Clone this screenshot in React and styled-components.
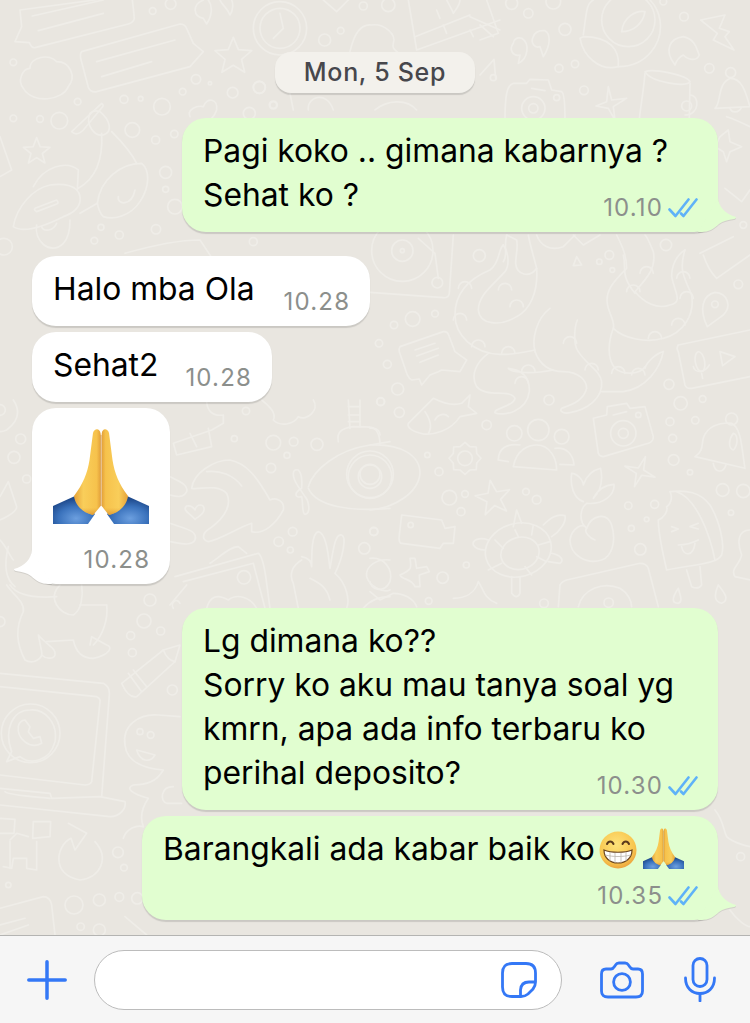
import React from 'react';
import styled, { createGlobalStyle } from 'styled-components';

const starPath = (cx, cy, R, r, n = 5, rot = -90) => {
  const pts = [];
  for (let i = 0; i < n * 2; i++) {
    const rad = i % 2 ? r : R;
    const a = ((rot + (i * 180) / n) * Math.PI) / 180;
    pts.push(`${(cx + rad * Math.cos(a)).toFixed(1)} ${(cy + rad * Math.sin(a)).toFixed(1)}`);
  }
  return `M${pts.join(' L')}Z`;
};

/* wallpaper doodles, traced at 3x from the crops, so each group has an origin */
const doodles = [
  {
    x: 0, y: 0,
    paths: [
      'M60 30 L395 -15 Q400 20 403 55 Q400 68 385 72 L105 143 Q95 145 88 128 L45 125 L65 80 Z',
      'M97 48 L310 0', 'M115 92 L310 40',
      'M245 155 L540 72 Q555 72 560 85 L580 130 L610 155 L570 200 L290 275 Q272 278 265 262 L242 175 Q240 160 245 155Z',
      'M290 185 L525 120', 'M305 230 L455 185',
      'M70 265 C50 240 70 205 90 205 C90 170 150 160 170 185 C210 185 230 230 205 260 C190 300 100 315 70 265Z',
      starPath(700, 170, 58, 26), starPath(110, 455, 42, 18),
      'M0 410 L35 510 L0 530',
      'M610 0 C575 15 580 50 610 55 L620 72 C635 50 640 20 625 0', 'M660 0 C665 15 680 20 690 45 C700 30 700 10 695 0',
      'M570 350 C560 330 590 315 610 320 C620 290 655 295 650 330 C645 345 640 350 635 355',
      'M40 680 C50 620 100 565 150 555 C190 550 235 555 240 590 C245 620 220 640 190 650 C130 680 70 700 40 680Z',
      'M105 625 L170 600 Q178 610 170 612 L110 635 Q100 630 105 625Z',
      'M110 675 C100 720 150 770 190 730 C205 715 210 695 210 660',
      'M125 680 C130 695 160 695 170 670',
      'M100 560 C130 500 200 480 235 510 L232 570',
      'M235 565 C280 540 310 490 305 400',
      'M292 610 C300 540 360 490 425 490 C450 510 450 560 420 605 C390 650 340 660 310 650 C300 640 295 625 292 610Z',
      'M240 640 L292 610',
      'M355 590 C350 615 395 620 405 570',
      'M335 395 C370 430 400 470 410 490',
      'M215 395 L305 310 Q312 315 308 320 L250 390 Q230 410 215 395Z',
      'M270 340 C255 375 285 410 310 405 C340 395 330 360 300 335 C285 330 275 335 270 340Z',
      'M375 760 C480 730 560 720 600 720 L640 780',
    ],
    circles: [[40, 187, 10], [40, 355, 10], [120, 357, 10], [178, 362, 25], [233, 305, 10], [372, 298, 12], [422, 296, 7], [486, 320, 25], [397, 390, 22], [467, 420, 12], [523, 402, 11], [497, 517, 18], [497, 568, 9], [525, 620, 22], [548, 275, 10], [588, 238, 14], [630, 250, 5], [698, 278, 16], [778, 262, 18], [820, 315, 12], [748, 340, 18], [458, 33, 10], [512, 12, 16], [303, 682, 9], [358, 705, 12], [468, 688, 14], [283, 722, 10], [760, 725, 12], [12, 740, 25]],
  },
  {
    x: 250, y: 0,
    paths: [
      'M90 40 L100 85 L70 115',
      'M300 155 C310 110 330 70 365 75 C400 70 440 100 430 130 C425 150 440 150 445 160',
      'M220 0 L260 35 L295 0',
      'M475 0 L500 150 L750 60', 'M495 110 L660 45', 'M580 75 L590 100', 'M560 30 L570 55', 'M660 90 L670 110', 'M660 50 L750 90',
      'M590 0 C600 20 610 35 610 40 C620 25 630 15 630 0',
      'M120 280 L130 330', 'M175 330 C170 290 230 270 250 330', 'M375 330 C410 300 470 295 500 330',
    ],
    circles: [[90, 85, 80], [90, 85, 60], [340, 18, 12], [415, 15, 20], [272, 92, 10], [224, 120, 18], [28, 262, 18], [70, 315, 10]],
  },
  {
    x: 480, y: 0,
    paths: [
      'M20 0 L55 100 L0 120', 'M0 75 L40 110',
      'M100 130 C85 150 100 170 120 165 L115 190 C145 175 150 130 125 115 C110 110 100 120 100 130Z',
      'M160 110 C150 130 165 145 180 140 L190 170 C215 130 210 100 195 92 C175 90 165 95 160 110Z',
      'M310 105 C320 30 320 10 340 0',
      'M310 110 C390 110 420 150 415 200 C360 215 310 170 300 115Z',
      'M415 200 C500 200 550 130 540 60 C535 30 520 10 510 0',
      'M425 95 C430 50 470 30 495 35 C490 70 460 95 425 95Z',
      'M662 60 L735 45 L718 85 L748 95 L735 110 L762 150 L700 120 L712 100 Z',
      'M585 195 C550 150 570 115 610 110 C650 120 650 150 658 165 C650 185 625 180 610 165 C600 170 590 180 585 195Z',
      'M495 215 C520 205 620 225 630 245 C620 265 510 245 495 215Z',
      'M495 220 C490 280 480 330 478 360', 'M630 250 L628 355', 'M630 285 C660 285 660 345 615 345',
      'M705 325 C725 310 710 250 752 235 C790 235 800 290 810 320 L705 325Z',
      'M750 325 C755 340 775 340 785 322',
      'M75 360 C75 290 80 255 100 250 L140 250 L150 238 L205 240 L215 270 L245 275 Q255 280 255 360',
      'M155 265 L195 272',
      'M385 260 L395 300 L440 295 L400 320 L405 360 L385 325 L348 318 L380 305Z',
      'M0 225 L42 178 L47 235',
    ],
    circles: [[95, 10, 18], [145, 40, 14], [220, 5, 22], [255, 88, 18], [237, 205, 12], [285, 192, 11], [312, 271, 13], [612, 50, 13], [688, 205, 14], [550, 5, 10], [445, 60, 80], [752, 218, 15], [160, 325, 35], [160, 325, 14], [230, 293, 9], [40, 233, 9], [620, 318, 15]],
  },
  {
    x: 370, y: 235,
    paths: [
      'M250 0 L238 175 Q235 190 220 188 L0 172', 'M145 10 L195 55 L205 130',
      'M400 30 C385 40 390 85 360 105 C300 130 255 170 255 240 C255 300 310 355 390 358 C430 360 470 350 495 345',
      'M400 30 C415 50 420 90 405 110 C370 150 325 180 325 225 C330 270 390 275 440 245 C480 225 505 170 500 100 C490 60 480 30 475 0',
      'M500 100 C480 130 440 120 437 85 C437 60 445 40 440 15 C420 5 410 0 410 0',
      'M540 220 C500 250 485 310 495 350 C510 390 540 410 580 410 C630 410 650 440 650 460 C640 500 600 510 575 520 C565 530 585 537 600 533 C650 525 700 490 695 440 C690 405 650 390 625 350 C610 330 612 280 622 255',
      'M945 45 C920 60 905 90 905 125 C915 175 940 200 900 210 C860 225 820 200 795 170 C830 130 860 100 850 50 C830 0 825 0 825 0',
      'M795 175 C750 120 770 100 760 60', 'M740 0 C755 30 770 60 770 100 C730 140 700 170 715 220 C725 250 735 265 730 280 C715 320 710 370 735 400 C760 420 810 420 825 395',
      'M730 280 C760 310 830 325 880 310 C940 295 975 240 965 180 C945 130 925 110 945 45',
      'M355 355 C320 380 300 420 320 455 C350 490 420 460 435 490 C430 515 370 520 375 533 C400 545 470 530 478 470 C480 430 460 405 415 400 C420 410 470 420 550 405',
      'M880 350 C860 355 830 380 825 400', 'M880 350 C870 400 830 460 760 470 L695 470',
      ...[[285, 160], [325, 335], [415, 355], [440, 215], [405, 165], [790, 170], [830, 115], [940, 130], [950, 190], [925, 270], [855, 310], [745, 415], [805, 420], [665, 405], [600, 325], [455, 445], [475, 410], [270, 255]].map(([x, y]) => `M${x - 20} ${y} a20 20 0 0 1 40 0`),
      'M90 335 L220 290 Q232 288 236 300 L255 350 L290 375 L270 410 L215 405 L205 410 L180 420 L155 450 L148 432 L125 435 Q118 432 112 420 L88 350 Q86 340 90 335Z',
      'M135 345 L195 325', 'M140 363 L205 340', 'M150 382 L205 360',
      'M115 565 L190 490 C230 510 260 510 275 505 L300 480 L295 515 L320 535 L270 545 C240 590 190 600 160 597 C130 590 110 580 115 565Z',
      'M165 530 C185 560 185 580 175 595', 'M195 555 C205 535 225 535 235 545',
      'M670 550 L710 540 L712 515 L770 505 L780 520 L825 515 L850 605 Q850 620 835 625 L700 665 Q690 665 685 655 Z',
      'M730 540 L770 530',
      'M430 695 C440 640 480 630 500 630 C540 630 560 670 560 705 Z',
      'M385 675 C385 640 410 625 450 630', 'M415 680 L385 675', 'M555 640 C590 635 610 660 612 690 L570 688',
      starPath(285, 670, 48, 38, 8), starPath(370, 790, 55, 22, 5, -100), starPath(810, 710, 48, 12, 4, -70),
      'M640 800 C610 790 600 750 605 715 C620 715 640 735 640 750 C650 720 670 705 692 700 C700 740 690 770 670 790 C680 770 700 750 732 748 C735 780 700 810 650 805 C630 820 625 860 650 880 C665 840 710 830 725 870 C740 920 725 965 695 975 C650 990 600 960 600 915 C605 880 640 860 650 880',
      'M650 880 C640 890 660 910 675 915',
      'M900 770 C950 765 990 770 1020 810 C1050 860 1065 930 1055 960 C1040 985 1000 985 890 1005 C880 960 865 900 865 855 C880 850 895 830 890 815 C900 810 910 790 900 770Z',
      'M920 770 C980 790 1020 900 1035 975', 'M950 1005 L965 1055 Q985 1065 995 1050 L990 995',
      'M905 875 L925 882 L905 890', 'M985 865 L960 875 L985 882', 'M925 930 C950 930 965 925 985 915', 'M935 935 C940 965 970 965 975 925',
      'M520 870 C540 850 560 835 585 842 C590 860 570 890 545 905',
      'M430 875 L440 825 L455 865', 'M355 915 C330 905 305 915 310 930 C320 945 340 945 345 945', 'M545 955 C570 960 585 975 570 985 L535 980', 'M425 1025 L425 1075 Q440 1095 450 1075 L450 1025',
      'M435 885 L445 905', 'M490 870 L485 900', 'M540 920 L505 930', 'M500 965 L530 980', 'M465 995 L485 1020', 'M395 985 L355 1005', 'M375 915 L400 940',
      'M1000 610 C1010 575 1050 560 1085 565 C1115 580 1115 640 1125 700 L975 665 C1000 650 995 630 1000 610Z', 'M1030 685 C1035 715 1060 715 1068 690', 'M1090 595 C1075 615 1075 640 1090 645 C1105 630 1105 600 1090 595Z',
      'M925 330 L1140 285', 'M925 330 Q918 340 925 350 L945 450 Q950 462 965 460 L1140 425', 'M1050 350 L1095 365 L1058 392Z', 'M970 395 C975 415 1005 415 1018 390', 'M995 415 L998 430',
      'M1012 275 C985 220 1000 180 1035 172 C1075 175 1085 215 1060 240 Z',
      'M0 630 C90 625 150 660 150 715 C145 775 70 820 0 825', 'M0 580 C20 575 30 600 30 630',
      'M95 840 L215 855 L225 880 L255 875 L250 925 L220 925 L210 940 L95 925 Q85 925 88 900Z',
      'M120 970 C125 1000 125 1005 90 1020 C95 1035 125 1030 135 1055 L150 1055 L148 1020 L178 1010 L170 995 L140 1000 L135 970Z',
      'M0 1070 L30 1095 L70 1075 C100 1075 130 1090 140 1115', 'M250 1090 C285 1090 315 1075 325 1040 C340 1060 340 1090 380 1105',
      'M565 1115 L570 1050 Q575 1040 590 1035 L810 985 Q830 985 835 1000 L865 1115', 'M625 1115 C640 1060 700 1040 750 1060 C775 1075 785 1100 785 1115',
      'M925 1060 C905 1090 905 1105 925 1105 C940 1100 930 1080 925 1060Z', 'M1045 1050 C1030 1085 1035 1100 1055 1105 C1080 1095 1065 1075 1045 1050Z',
      'M0 970 C40 965 70 1000 60 1040 C40 1080 0 1060 0 1040', 'M1140 885 C1105 885 1100 920 1115 960 C1110 990 1080 1000 1095 1025 L1140 1035',
      'M1000 60 C1010 90 1020 110 1040 130 L1140 60', 'M990 55 L1090 5',
      'M410 0 C400 40 415 60 400 80', 'M500 0 C510 30 540 50 580 35 L615 0', 'M610 0 L640 30 L690 0', 'M620 65 L635 90 L610 92 Z',
    ],
    circles: [[97, 47, 92], [97, 47, 32], [97, 47, 6], [202, 143, 16], [328, 62, 18], [888, 30, 17], [718, 60, 13], [688, 80, 8], [727, 105, 7], [1105, 148, 13], [128, 252, 22], [195, 236, 10], [72, 270, 11], [27, 325, 11], [52, 388, 12], [83, 462, 18], [32, 500, 11], [88, 532, 15], [350, 570, 14], [537, 495, 15], [897, 448, 15], [932, 505, 20], [998, 492, 10], [900, 560, 12], [976, 556, 11], [908, 610, 12], [911, 675, 16], [960, 712, 8], [1058, 765, 19], [1120, 768, 20], [1083, 833, 8], [172, 660, 8], [207, 710, 12], [238, 788, 22], [285, 777, 10], [273, 830, 12], [468, 770, 10], [500, 794, 13], [775, 812, 11], [854, 808, 12], [830, 853, 7], [784, 880, 9], [811, 943, 17], [12, 890, 12], [289, 990, 9], [218, 1028, 17], [176, 1098, 10], [522, 1105, 13], [760, 595, 38], [760, 595, 15], [805, 540, 8], [0, 718, 70], [0, 718, 30], [122, 870, 8], [1035, 208, 10], [1085, 552, 18], [716, 1103, 14], [505, 585, 32], [433, 595, 23], [575, 605, 22], [285, 670, 22]],
    ellipses: [[445, 945, 100, 80, -15], [450, 955, 58, 48, -15], [990, 380, 14, 30, -10]],
  },
  {
    x: 170, y: 400,
    paths: [
      'M65 265 C70 220 130 180 180 180 C230 190 260 230 300 300 C320 290 345 305 340 330 C320 370 280 405 245 395 L245 370 C200 385 150 420 115 425 C95 420 95 400 120 385 C170 350 185 310 170 280 C140 250 90 270 65 265Z',
      'M215 258 C190 225 150 210 110 215',
      'M75 358 C60 340 35 330 50 318 C65 315 72 325 75 330 C80 310 105 310 102 330 C100 345 85 350 75 358Z',
      'M0 230 C30 245 55 255 50 275 C40 295 20 290 0 285', 'M0 370 C40 385 85 390 75 420 C65 440 30 430 0 425',
      'M415 260 C430 210 500 150 600 135 L660 125', 'M415 265 C440 320 540 335 660 325',
      'M505 125 C500 100 510 85 550 80 C600 80 630 80 630 105', 'M540 85 L535 0', 'M570 80 L570 0', 'M535 20 L570 20', 'M535 45 L570 45', 'M535 65 L570 65',
      'M385 260 C365 230 365 205 385 210 C400 225 395 250 395 265 C370 280 375 295 395 290 C400 310 395 340 405 343 C425 340 415 300 405 290 Z',
      'M395 470 C420 475 425 490 425 500 C425 460 425 400 445 395 C470 400 475 470 480 505 C490 450 495 400 515 405 C530 410 520 470 495 520 C530 550 540 600 530 625',
      'M395 480 C370 495 355 520 370 550 L385 625', 'M420 535 C450 550 470 560 480 600',
      'M15 530 L265 460 Q280 470 290 550 L300 625', 'M40 545 L250 490 L285 625', 'M110 625 C120 590 140 580 175 600 C200 580 240 590 260 625',
      'M120 490 C150 470 180 440 205 440 L230 460', 'M10 625 C0 610 20 590 30 610',
      'M110 0 C110 30 125 50 160 45 L160 70 L125 90 L10 130 L20 165 L125 140 L115 85', 'M60 100 L80 140',
      'M275 0 C300 20 320 40 310 60 C330 80 370 75 385 50 C410 65 450 30 430 0',
      'M660 480 C620 475 585 500 590 530 C600 560 640 580 660 570', 'M580 625 C600 600 630 590 660 590',
    ],
    circles: [[600, 230, 65], [600, 230, 35], [228, 33, 11], [193, 116, 9], [310, 128, 22], [371, 125, 13], [351, 166, 9], [441, 133, 18], [303, 204, 14], [368, 395, 13], [326, 425, 14], [361, 450, 9], [611, 394, 12], [583, 445, 17], [632, 5, 12], [222, 532, 20]],
  },
  {
    x: 0, y: 400,
    paths: ['M0 290 L25 245 L50 320 C50 340 0 360 0 360', 'M40 0 C60 30 60 60 20 90 C10 95 0 95 0 95', 'M0 420 C20 440 30 470 40 480', 'M25 440 C10 500 20 540 45 560'],
    circles: [[62, 117, 15], [42, 172, 18], [80, 237, 12], [0, 30, 16]],
  },
  {
    x: 0, y: 585,
    paths: [
      'M20 0 C40 30 75 50 70 80 C50 120 45 170 75 225 C100 240 130 220 125 200 L115 150 C140 180 170 190 165 210 C160 225 135 220 125 210',
      'M140 170 L220 165 C225 190 240 220 280 220 C330 210 340 185 320 180 L275 155 L270 180', 'M320 60 C325 100 310 150 280 180',
      'M180 0 C140 40 180 90 220 90 C245 75 250 30 245 0', 'M30 0 C50 30 100 40 170 35', 'M240 60 L320 60',
      'M365 295 L490 195 L540 180 L525 230 L410 335 Q385 340 365 295Z', 'M490 195 C500 220 510 225 525 230', 'M385 265 L425 320', 'M400 255 L440 305',
      'M0 265 L310 295 Q330 305 328 330 L305 635', 'M0 305 L290 335 Q302 340 300 350 L275 590 Q270 600 255 600 L0 570',
      'M0 610 L150 625 L155 640 L300 635 L375 650 C380 670 360 695 330 695 L0 660', 'M15 620 C20 630 100 635 150 640',
      'M35 500 L20 530 L60 515 C90 540 150 530 165 470 C175 410 130 370 90 375 C40 375 10 430 35 500Z',
      'M55 425 C50 460 90 495 125 475 L120 455 L100 460 L85 440 L90 425 L75 405 C65 405 55 415 55 425Z',
      'M0 700 L45 703 L42 745 L0 745', 'M100 710 L152 710 L150 755 L98 760 Z', 'M30 770 L30 850', 'M30 765 L50 745 L85 755', 'M110 770 L110 855 L80 850 L80 820 L40 820 L35 850 L10 845',
      'M205 715 L260 745 L225 795 L213 760 C170 780 150 870 240 885 C300 880 330 820 285 770',
      'M375 480 C365 420 420 385 475 390 L540 395', 'M375 480 C380 530 430 550 490 555 C470 590 440 600 400 600 C375 610 395 625 445 640 C425 670 420 700 430 725',
      'M370 760 C380 730 410 720 430 725', 'M410 495 L465 510 C450 535 420 530 410 495Z', 'M520 605 C480 605 480 650 500 655 L545 655',
      'M0 970 L130 935 Q150 935 155 960 L165 1050', 'M0 1020 L75 1000', 'M0 1050 L85 1020', 'M375 995 L440 1050', 'M510 60 L560 0',
    ],
    circles: [[450, 45, 18], [432, 108, 21], [392, 152, 12], [482, 138, 12], [397, 203, 12], [517, 315, 15], [354, 802, 16], [372, 848, 10], [25, 900, 8], [222, 960, 27], [298, 945, 18], [358, 936, 13], [412, 940, 17], [242, 1025, 11], [298, 1035, 18], [0, 110, 15], [92, 445, 88], [452, 450, 10], [420, 440, 9]],
  },
  {
    x: 560, y: 110,
    paths: ['M480 80 L505 60 L510 95 L545 110 L510 125 L500 155 L490 125 L465 110Z', 'M495 235 L545 275 L570 240', 'M500 20 C530 30 570 50 570 50'],
    circles: [[550, 345, 10]],
  },
  {
    x: 560, y: 810,
    paths: ['M465 0 C490 30 490 60 500 80 C520 100 570 110 570 110', 'M510 300 C530 330 560 350 570 350'],
    circles: [[542, 140, 12]],
  },
];

const Wallpaper = () => (
  <DoodleLayer viewBox="0 0 750 935" aria-hidden="true">
    {doodles.map((g, i) => (
      <g key={i} transform={`translate(${g.x} ${g.y}) scale(0.3333)`}>
        {g.paths.map((d, j) => <path key={j} d={d} />)}
        {g.circles.map(([cx, cy, r], j) => <circle key={j} cx={cx} cy={cy} r={r} />)}
        {(g.ellipses || []).map(([cx, cy, rx, ry, rot], j) => (
          <ellipse key={j} cx={cx} cy={cy} rx={rx} ry={ry} transform={`rotate(${rot} ${cx} ${cy})`} />
        ))}
      </g>
    ))}
  </DoodleLayer>
);

const Tail = ({ side, color }) => (
  <TailShape $side={side} viewBox="0 0 40 34" aria-hidden="true">
    <path fill={color} d="M20 0 C21 9 27 16 38 19 C38 20 37 21 36 21 C30 22 25 23 21 26 C16 31 10 34 4 34 L0 34 Z" />
  </TailShape>
);

const Ticks = () => (
  <svg width="30" height="20" viewBox="0 0 30 20" fill="none" stroke="#5fb2f8" strokeWidth="2.6" strokeLinecap="round" strokeLinejoin="round" aria-hidden="true">
    <path d="M1.5 11.5 L7.5 18 L20.5 1.5" />
    <path d="M13 15.5 L15.5 18 L28.5 1.5" />
  </svg>
);

const PrayingHands = ({ size }) => (
  <EmojiSvg width={size} height={size} viewBox="0 0 96 96" aria-hidden="true">
    <defs>
      <linearGradient id="palm" x1="0" y1="0" x2="1" y2="0">
        <stop offset="0" stopColor="#e5a23a" />
        <stop offset="0.35" stopColor="#f9ce5a" />
        <stop offset="0.85" stopColor="#f6c24c" />
        <stop offset="1" stopColor="#e3a03a" />
      </linearGradient>
      <radialGradient id="sleeve" cx="0.55" cy="0.8" r="0.7">
        <stop offset="0" stopColor="#6c9fdf" />
        <stop offset="0.6" stopColor="#3a72bc" />
        <stop offset="1" stopColor="#1f4a8c" />
      </radialGradient>
      <linearGradient id="wrist" x1="0" y1="0" x2="0" y2="1">
        <stop offset="0.6" stopColor="#e9a73c" stopOpacity="0" />
        <stop offset="1" stopColor="#d78f2c" stopOpacity="0.8" />
      </linearGradient>
    </defs>
    <path fill="url(#sleeve)" d="M0 78 L22 68 L42 86 L35 96 L0 96Z" />
    <path fill="url(#sleeve)" d="M96 78 L74 68 L54 86 L61 96 L96 96Z" />
    <path fill="url(#palm)" d="M47.7 6 C47 0 41.5 0 40 5 L36.5 32 C34.5 45 30 56 21 68 C22 76 28 84 40 87 L47.7 78Z" />
    <path fill="url(#palm)" transform="matrix(-1 0 0 1 96 0)" d="M47.3 6 C47 0 41.5 0 40 5 L36.5 32 C34.5 45 30 56 21 68 C22 76 28 84 40 87 L47.3 78Z" />
    <path fill="url(#wrist)" d="M21 68 C22 76 28 84 40 87 L48 78 L56 87 C68 84 74 76 75 68Z" />
    <path fill="none" stroke="#c9822a" strokeWidth="0.7" d="M48 7 L48 78" />
  </EmojiSvg>
);

const Grin = ({ size }) => (
  <EmojiSvg width={size} height={size} viewBox="0 0 38 38" aria-hidden="true">
    <defs>
      <radialGradient id="face" cx="0.45" cy="0.35" r="0.7">
        <stop offset="0" stopColor="#fde27a" />
        <stop offset="0.7" stopColor="#f8c64e" />
        <stop offset="1" stopColor="#e8993a" />
      </radialGradient>
    </defs>
    <circle cx="19" cy="19" r="18.5" fill="url(#face)" />
    <path d="M8 13 C9.5 9.5 13 9.5 14.5 13 M23.5 13 C25 9.5 28.5 9.5 30 13" fill="none" stroke="#5b3a1c" strokeWidth="2" strokeLinecap="round" />
    <path d="M5 19 C12 22 26 22 33 19 C33 27 27 32 19 32 C11 32 5 27 5 19Z" fill="#fff" stroke="#6b4520" strokeWidth="1.2" />
    <path d="M6 24 C14 26 24 26 32 24 M11 21 L11 30 M16 22 L16 32 M22 22 L22 32 M27 21 L27 30" fill="none" stroke="#b9b4ab" strokeWidth="0.8" />
  </EmojiSvg>
);

const PlusIcon = () => (
  <svg width="40" height="40" viewBox="0 0 40 40" fill="none" stroke="#3478f6" strokeWidth="3.5" strokeLinecap="round" aria-hidden="true">
    <path d="M20 1.8 V38.2 M1.8 20 H38.2" />
  </svg>
);

const StickerIcon = () => (
  <svg width="36" height="36" viewBox="0 0 36 36" fill="none" stroke="#3478f6" strokeWidth="2.8" aria-hidden="true">
    <path d="M11 1.5 H25 Q34.5 1.5 34.5 11 V20 Q34.5 24 32 27 L27 32 Q24 34.5 20 34.5 H11 Q1.5 34.5 1.5 25 V11 Q1.5 1.5 11 1.5Z" />
    <path d="M34.5 20 H28 Q20 20 19.5 28 V34.5" />
  </svg>
);

const CameraIcon = () => (
  <svg width="44" height="38" viewBox="0 0 44 38" fill="none" stroke="#3478f6" strokeWidth="2.8" aria-hidden="true">
    <path d="M6 8 H11 Q13 8 14.5 5.5 L15.5 4 Q16.7 2 19 2 H25 Q27.3 2 28.5 4 L29.5 5.5 Q31 8 33 8 H38 Q42.5 8 42.5 13 V30 Q42.5 36 36 36 H8 Q1.5 36 1.5 30 V13 Q1.5 8 6 8Z" />
    <circle cx="22" cy="21" r="8.4" />
  </svg>
);

const MicIcon = () => (
  <svg width="32" height="45" viewBox="0 0 32 45" fill="none" stroke="#3478f6" strokeWidth="2.8" strokeLinecap="round" aria-hidden="true">
    <rect x="9" y="1.5" width="14" height="28" rx="7" />
    <path d="M1.5 21 C1.5 31 8 36.5 16 36.5 C24 36.5 30.5 31 30.5 21" />
    <path d="M16 36.5 V44" />
  </svg>
);

const Meta = ({ time, read }) => (
  <MetaRow>
    <MetaTime>{time}</MetaTime>
    {read && <Ticks />}
  </MetaRow>
);

export default function App() {
  return (
    <Screen>
      <GlobalStyle />
      <Chat>
        <Wallpaper />
        <DatePill>Mon, 5 Sep</DatePill>

        <OutBubble $top={25} $width={536}>
          <Overlap>
            <Text>Pagi koko .. gimana kabarnya ?<br />Sehat ko ?</Text>
            <Meta time="10.10" read />
          </Overlap>
          <Tail side="right" color={GREEN} />
        </OutBubble>

        <InBubble $top={24}>
          <InlineRow $gap={29}>
            <Text>Halo mba Ola</Text>
            <Meta time="10.28" />
          </InlineRow>
        </InBubble>
        <InBubble $top={6}>
          <InlineRow $gap={27}>
            <Text>Sehat2</Text>
            <Meta time="10.28" />
          </InlineRow>
        </InBubble>
        <InBubble $top={6} $emoji>
          <PrayingHands size={96} />
          <MetaGap $space={27}>
            <Meta time="10.28" />
          </MetaGap>
          <Tail side="left" color="#fff" />
        </InBubble>

        <OutBubble $top={24} $width={536}>
          <Overlap>
            <Text>Lg dimana ko??<br />Sorry ko aku mau tanya soal yg<br />kmrn, apa ada info terbaru ko<br />perihal deposito?</Text>
            <Meta time="10.30" read />
          </Overlap>
        </OutBubble>

        <OutBubble $top={6} $width={576}>
          <Text>
            Barangkali ada kabar baik ko
            <EmojiSlot $left={4}><Grin size={38} /></EmojiSlot>
            <EmojiSlot $left={6}><PrayingHands size={41} /></EmojiSlot>
          </Text>
          <MetaGap $space={16}>
            <Meta time="10.35" read />
          </MetaGap>
          <Tail side="right" color={GREEN} />
        </OutBubble>
      </Chat>

      <InputBar>
        <PlusIcon />
        <InputField>
          <StickerIcon />
        </InputField>
        <BarAction $left={38}><CameraIcon /></BarAction>
        <BarAction $left={40}><MicIcon /></BarAction>
      </InputBar>
    </Screen>
  );
}

const GREEN = '#e1fed0';

const GlobalStyle = createGlobalStyle`
  html, body {
    margin: 0;
    padding: 0;
    background: #e9e6e0;
  }
  * {
    box-sizing: border-box;
  }
`;

const Screen = styled.div`
  width: 750px;
  height: 1023px;
  display: flex;
  flex-direction: column;
  overflow: hidden;
  font-family: Inter, "Liberation Sans", sans-serif;
`;

const Chat = styled.div`
  position: relative;
  flex: 1;
  display: flex;
  flex-direction: column;
  padding: 52px 32px 0;
  background: #e9e6e0;
`;

const DoodleLayer = styled.svg`
  position: absolute;
  left: 0;
  top: 0;
  width: 750px;
  height: 935px;
  fill: none;
  stroke: #efede8;
  stroke-width: 5;
  stroke-linecap: round;
  stroke-linejoin: round;
`;

const DatePill = styled.div`
  position: relative;
  align-self: center;
  width: 200px;
  height: 41px;
  border-radius: 16px;
  background: #f3f1ec;
  box-shadow: 0 2px 1px rgba(0, 0, 0, 0.13);
  color: #47474c;
  font-size: 25px;
  font-weight: 500;
  letter-spacing: 0.7px;
  line-height: 41px;
  text-align: center;
`;

const Bubble = styled.div`
  position: relative;
  margin-top: ${p => p.$top}px;
  padding: 11px 20px 15px 21px;
  border-radius: 24px;
  box-shadow: 0 1.5px 1px rgba(0, 0, 0, 0.13);
`;

const OutBubble = styled(Bubble)`
  align-self: flex-end;
  width: ${p => p.$width}px;
  background: ${GREEN};
`;

const InBubble = styled(Bubble)`
  align-self: flex-start;
  background: #fff;
  padding-top: ${p => (p.$emoji ? 20 : 11)}px;
  padding-right: 21px;
`;

const Overlap = styled.div`
  display: grid;
  & > * {
    grid-area: 1 / 1;
  }
`;

const InlineRow = styled.div`
  display: flex;
  align-items: flex-end;
  gap: ${p => p.$gap}px;
`;

const Text = styled.div`
  color: #000;
  font-size: 31.8px;
  line-height: 44px;
  white-space: nowrap;
`;

const MetaRow = styled.div`
  justify-self: end;
  align-self: end;
  display: flex;
  justify-content: flex-end;
  align-items: center;
  gap: 6px;
  height: 18px;
  color: #8c8f8c;
  font-size: 24px;
  letter-spacing: 1.2px;
  line-height: 18px;
`;

const MetaTime = styled.span`
  margin-right: -1.2px;
`;

const MetaGap = styled.div`
  margin-top: ${p => p.$space}px;
`;

const EmojiSlot = styled.span`
  display: inline-block;
  margin-left: ${p => p.$left}px;
  vertical-align: -9px;
  line-height: 0;
`;

const EmojiSvg = styled.svg`
  display: block;
`;

const TailShape = styled.svg`
  position: absolute;
  bottom: 0;
  width: 40px;
  height: 34px;
  filter: drop-shadow(0 1px 0.5px rgba(0, 0, 0, 0.1));
  ${p => (p.$side === 'right' ? 'right: -20px;' : 'left: -20px; transform: scaleX(-1);')}
`;

const InputBar = styled.div`
  flex: none;
  height: 88px;
  display: flex;
  align-items: center;
  padding-left: 27px;
  background: #f6f6f6;
  border-top: 1px solid #b4b4b2;
`;

const InputField = styled.div`
  width: 468px;
  height: 60px;
  margin-left: 27px;
  padding-right: 24px;
  display: flex;
  align-items: center;
  justify-content: flex-end;
  background: #fff;
  border: 1px solid #bcbcbc;
  border-radius: 30px;
`;

const BarAction = styled.div`
  display: flex;
  margin-left: ${p => p.$left}px;
`;
